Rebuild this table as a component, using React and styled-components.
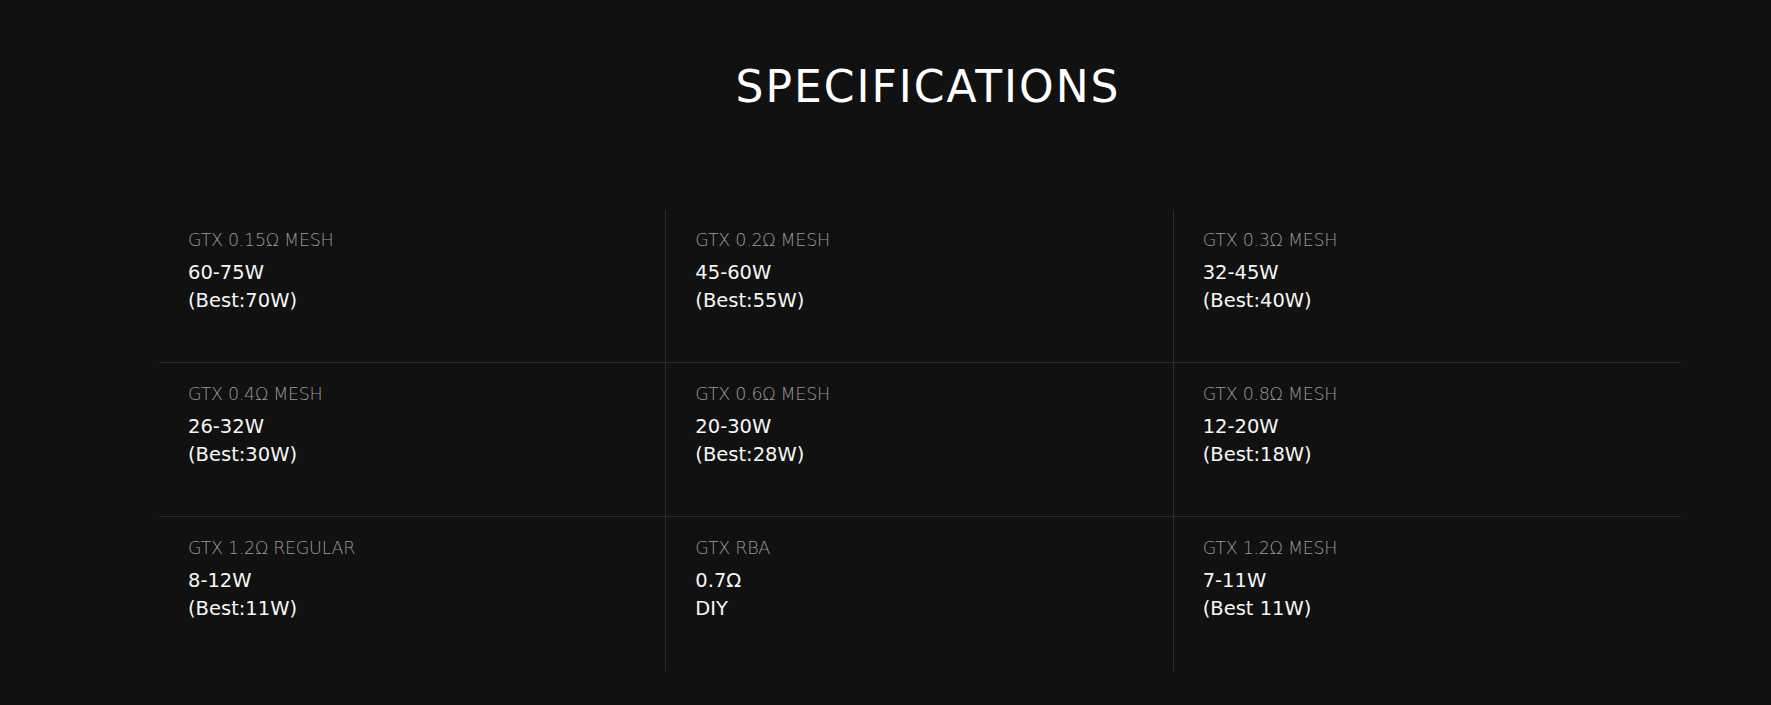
import styled, { createGlobalStyle } from "styled-components";

const GlobalStyle = createGlobalStyle`
  html, body {
    margin: 0;
    padding: 0;
    background: #111111;
  }
  body {
    font-family: "DejaVu Sans", "Liberation Sans", sans-serif;
    color: #f2f2f2;
    overflow: hidden;
  }
`;

const Section = styled.section`
  height: 705px;
  box-sizing: border-box;
  padding: 65px 90px 0 159px;
  background: #111111;
`;

const Title = styled.h2`
  margin: 0 0 101px;
  padding-left: 16px;
  font-size: 44px;
  line-height: 44px;
  font-weight: 400;
  letter-spacing: 2px;
  text-align: center;
  color: #ffffff;
`;

const Grid = styled.div`
  display: grid;
  grid-template-columns: repeat(3, 1fr);
`;

const Cell = styled.div`
  box-sizing: border-box;
  height: ${(p) => (p.$top ? "153px" : "154px")};
  padding: ${(p) => (p.$top ? "20px" : "21px")} 30px 0 29px;
  border-right: ${(p) => (p.$last ? "none" : "1px solid #2b2b2b")};
  border-bottom: ${(p) => (p.$bottom ? "none" : "1px solid #2b2b2b")};
`;

const Label = styled.div`
  font-size: 17.5px;
  line-height: 21px;
  font-weight: 300;
  letter-spacing: -0.3px;
  color: #9a9a9a;
  margin-bottom: 8px;
`;

const Value = styled.div`
  font-size: 19.5px;
  line-height: 28px;
  color: #f6f6f6;
`;

const specs = [
  { label: "GTX 0.15Ω MESH", lines: ["60-75W", "(Best:70W)"] },
  { label: "GTX 0.2Ω MESH", lines: ["45-60W", "(Best:55W)"] },
  { label: "GTX 0.3Ω MESH", lines: ["32-45W", "(Best:40W)"] },
  { label: "GTX 0.4Ω MESH", lines: ["26-32W", "(Best:30W)"] },
  { label: "GTX 0.6Ω MESH", lines: ["20-30W", "(Best:28W)"] },
  { label: "GTX 0.8Ω MESH", lines: ["12-20W", "(Best:18W)"] },
  { label: "GTX 1.2Ω REGULAR", lines: ["8-12W", "(Best:11W)"] },
  { label: "GTX RBA", lines: ["0.7Ω", "DIY"] },
  { label: "GTX 1.2Ω MESH", lines: ["7-11W", "(Best 11W)"] },
];

const App = () => {
  return (
    <>
      <GlobalStyle />
      <Section>
        <Title>SPECIFICATIONS</Title>
        <Grid>
          {specs.map((s, i) => (
            <Cell
              key={s.label}
              $top={i < 3}
              $last={i % 3 === 2}
              $bottom={i >= 6}
            >
              <Label>{s.label}</Label>
              {s.lines.map((l) => (
                <Value key={l}>{l}</Value>
              ))}
            </Cell>
          ))}
        </Grid>
      </Section>
    </>
  );
};

export default App;
